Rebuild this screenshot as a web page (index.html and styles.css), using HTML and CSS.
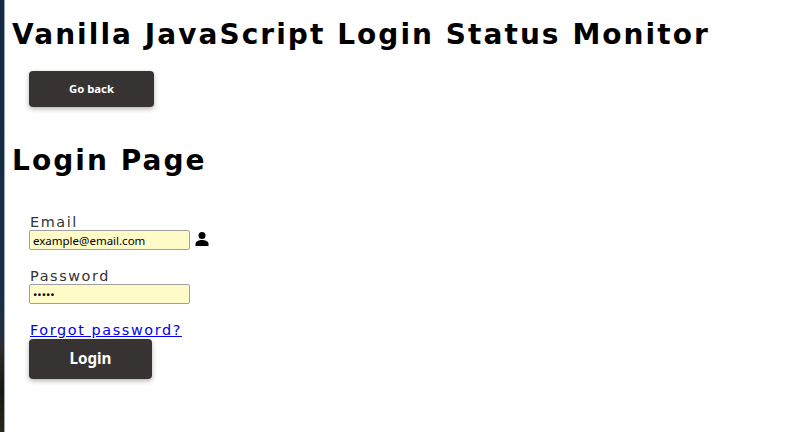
FILE: index.html
```html
<!DOCTYPE html>
<html lang="en">
<head>
<meta charset="utf-8">
<title>Vanilla JavaScript Login Status Monitor</title>
<link rel="stylesheet" href="styles.css">
</head>
<body>
<div class="wallpaper"></div>
<main class="page">
  <h1 class="title">Vanilla JavaScript Login Status Monitor</h1>
  <div class="back-row"><button class="btn btn-back" type="button">Go back</button></div>
  <h2 class="subtitle">Login Page</h2>
  <form class="form">
    <label class="label" for="email">Email</label>
    <div class="field">
      <input class="input" id="email" type="text" value="example@email.com">
      <svg class="icon" viewBox="0 0 14 14" width="14" height="14" aria-hidden="true"><circle cx="7" cy="3.500" r="3.500" fill="#000"/><path d="M0.500 14v-2.200C0.500 9.200 4 8 7 8s6.500 1.200 6.500 3.800V14z" fill="#000"/></svg>
    </div>
    <label class="label label-pass" for="password">Password</label>
    <div class="field">
      <input class="input" id="password" type="password" value="abcde">
    </div>
    <a class="forgot" href="#">Forgot password?</a>
    <button class="btn btn-login" type="button">Login</button>
  </form>
</main>
</body>
</html>
```
FILE: styles.css
```css
html, body { margin: 0; padding: 0; height: 100%; background: #fff; overflow: hidden; }
body { display: flex; font-family: "DejaVu Sans", sans-serif; color: #000; }
.wallpaper { width: 4px; flex: none; border-right: 1px solid #9aa6b2; background: linear-gradient(#142a42 0, #172e48 68%, #262e3a 78%, #2e2b27 81%, #181812 90%, #26261a 100%); }
.page { flex: 1; padding: 0 8px 0 6px; min-width: 0; }
.title { margin: 18px 0 0 1px; font-size: 28px; line-height: 34px; font-weight: 700; letter-spacing: 2.050px; white-space: nowrap; }
.back-row { padding: 19px 0 0 18px; }
.btn { display: block; border: 0; border-radius: 4px; background: #383333; color: #fff; font-family: "Noto Sans", sans-serif; font-weight: 700; box-shadow: 0 2px 5px rgba(0,0,0,.3); padding: 0; }
.btn-back { width: 125px; height: 36px; padding-bottom: 1px; font-size: 11.300px; }
.subtitle { margin: 37px 0 0 1px; font-size: 28px; line-height: 34px; font-weight: 700; letter-spacing: 2.050px; }
.form { padding: 35px 0 0 18px; display: flex; flex-direction: column; align-items: flex-start; }
.label { font-size: 14.400px; line-height: 19px; margin-bottom: -2px; letter-spacing: 1.600px; color: #333; margin-left: 1px; }
.label-pass { margin-top: 17px; }
.field { display: flex; align-items: center; gap: 5px; }
.input { box-sizing: border-box; width: 161px; height: 20px; padding: 0 3px; border: 1px solid #a0a0a0; border-radius: 2px; background: #fffbc8; font-family: "Noto Sans", sans-serif; font-size: 11.500px; color: #000; outline: none; }
.icon { display: block; margin-top: -3px; }
.forgot { margin: 17px 0 -1px 1px; font-size: 14.400px; line-height: 19px; letter-spacing: 1.600px; color: #00e; text-decoration: underline; }
.btn-login { width: 123px; height: 40px; padding-bottom: 2px; font-size: 15.200px; }
```
